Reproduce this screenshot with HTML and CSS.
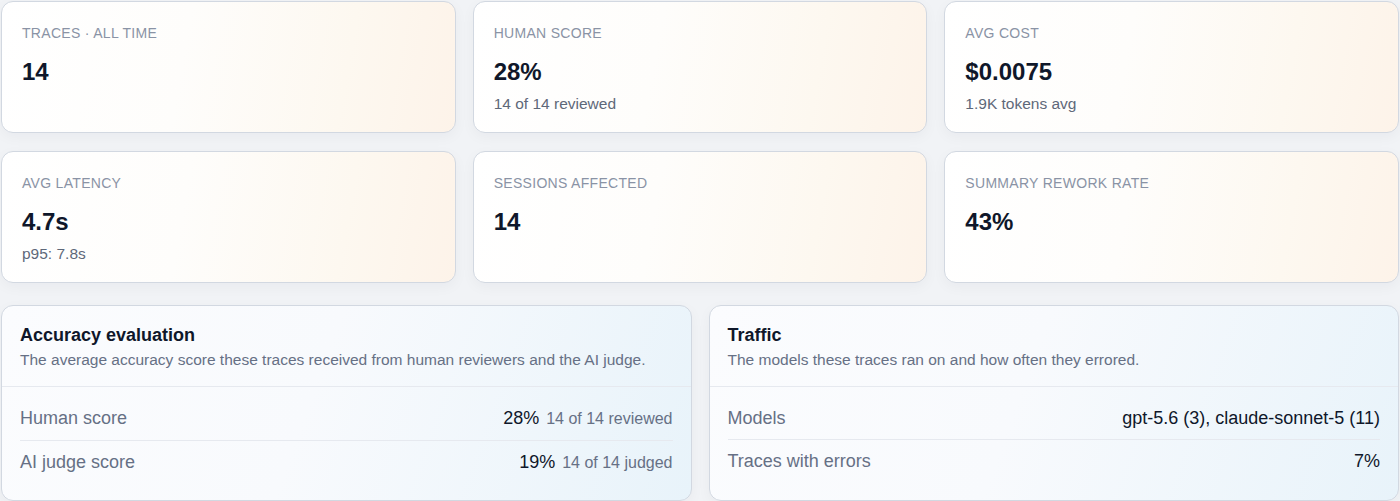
FILE: index.html
```html
<!DOCTYPE html>
<html>
<head>
  <meta charset="UTF-8">
  <title>Trace overview</title>
  <link rel="stylesheet" href="styles.css">
</head>
<body>

  <div class="dashboard">
    <div class="stat-grid">
      <div class="stat-card">
        <div class="stat-label">Traces · all time</div>
        <div class="stat-value">14</div>
      </div>
      <div class="stat-card">
        <div class="stat-label">Human score</div>
        <div class="stat-value">28%</div>
        <div class="stat-sub">14 of 14 reviewed</div>
      </div>
      <div class="stat-card">
        <div class="stat-label">Avg cost</div>
        <div class="stat-value">$0.0075</div>
        <div class="stat-sub">1.9K tokens avg</div>
      </div>
      <div class="stat-card">
        <div class="stat-label">Avg latency</div>
        <div class="stat-value">4.7s</div>
        <div class="stat-sub">p95: 7.8s</div>
      </div>
      <div class="stat-card">
        <div class="stat-label">Sessions affected</div>
        <div class="stat-value">14</div>
      </div>
      <div class="stat-card">
        <div class="stat-label">Summary rework rate</div>
        <div class="stat-value">43%</div>
      </div>
    </div>

    <div class="panel-grid">
      <div class="panel">
        <div class="panel-header">
          <h3>Accuracy evaluation</h3>
          <p>The average accuracy score these traces received from human reviewers and the AI judge.</p>
        </div>
        <div class="panel-body">
          <div class="panel-row">
            <span class="row-label">Human score</span>
            <span class="row-value">28%<span class="row-note">14 of 14 reviewed</span></span>
          </div>
          <div class="panel-row">
            <span class="row-label">AI judge score</span>
            <span class="row-value">19%<span class="row-note">14 of 14 judged</span></span>
          </div>
        </div>
      </div>

      <div class="panel">
        <div class="panel-header">
          <h3>Traffic</h3>
          <p>The models these traces ran on and how often they errored.</p>
        </div>
        <div class="panel-body">
          <div class="panel-row">
            <span class="row-label">Models</span>
            <span class="row-value">gpt-5.6 (3), claude-sonnet-5 (11)</span>
          </div>
          <div class="panel-row">
            <span class="row-label">Traces with errors</span>
            <span class="row-value">7%</span>
          </div>
        </div>
      </div>
    </div>
  </div>

</body>
</html>
```

FILE: styles.css
```css
:root {
  --page-bg: #f1f3f6;
  --card-border: #d2d8e1;
  --divider: #e6e9ef;
  --label-color: #8a93a5;
  --value-color: #0f172a;
  --sub-color: #5e6879;
  --muted-color: #667085;
}
body {
  font-family: "Liberation Sans", Arial, Helvetica, sans-serif;
  margin: 0;
  background-color: var(--page-bg);
  color: var(--value-color);
}
.dashboard {
  padding: 1px;
}
.stat-grid {
  display: grid;
  grid-template-columns: repeat(3, 1fr);
  column-gap: 17px;
  row-gap: 18px;
}
.stat-card {
  background: linear-gradient(100deg, #ffffff 0%, #fefdfb 40%, #fdf8f0 75%, #fdf3e9 100%);
  border: 1px solid var(--card-border);
  border-radius: 12px;
  padding: 21px 20px 18px;
  box-shadow: 0 4px 14px rgba(15, 23, 42, 0.04);
}
.stat-label {
  font-size: 14px;
  line-height: 20px;
  letter-spacing: 0.3px;
  text-transform: uppercase;
  color: var(--label-color);
}
.stat-value {
  margin-top: 13px;
  font-size: 24px;
  line-height: 32px;
  font-weight: 700;
  color: var(--value-color);
}
.stat-sub {
  margin-top: 6px;
  font-size: 15.5px;
  line-height: 20px;
  color: var(--sub-color);
}
.panel-grid {
  display: grid;
  grid-template-columns: 1fr 1fr;
  gap: 17px;
  margin-top: 22px;
}
.panel {
  background: linear-gradient(110deg, #fbfcfe 0%, #f8fafd 45%, #e8f3fa 100%);
  border: 1px solid var(--card-border);
  border-radius: 12px;
  box-shadow: 0 4px 14px rgba(15, 23, 42, 0.04);
}
.panel-header {
  padding: 17px 18px 15px;
  border-bottom: 1px solid var(--divider);
}
.panel-header h3 {
  margin: 0;
  font-size: 18px;
  line-height: 24px;
  font-weight: 700;
  color: var(--value-color);
}
.panel-header p {
  margin: 2px 0 0;
  font-size: 15.5px;
  line-height: 22px;
  color: var(--muted-color);
}
.panel-body {
  padding: 10px 18px 16px;
}
.panel-row {
  display: flex;
  justify-content: space-between;
  align-items: baseline;
  padding: 8px 0;
  font-size: 18px;
  line-height: 26px;
}
.panel-row + .panel-row {
  border-top: 1px solid var(--divider);
}
.row-label {
  color: var(--muted-color);
}
.row-value {
  color: var(--value-color);
}
.row-note {
  margin-left: 7px;
  font-size: 16px;
  color: var(--muted-color);
}
```
